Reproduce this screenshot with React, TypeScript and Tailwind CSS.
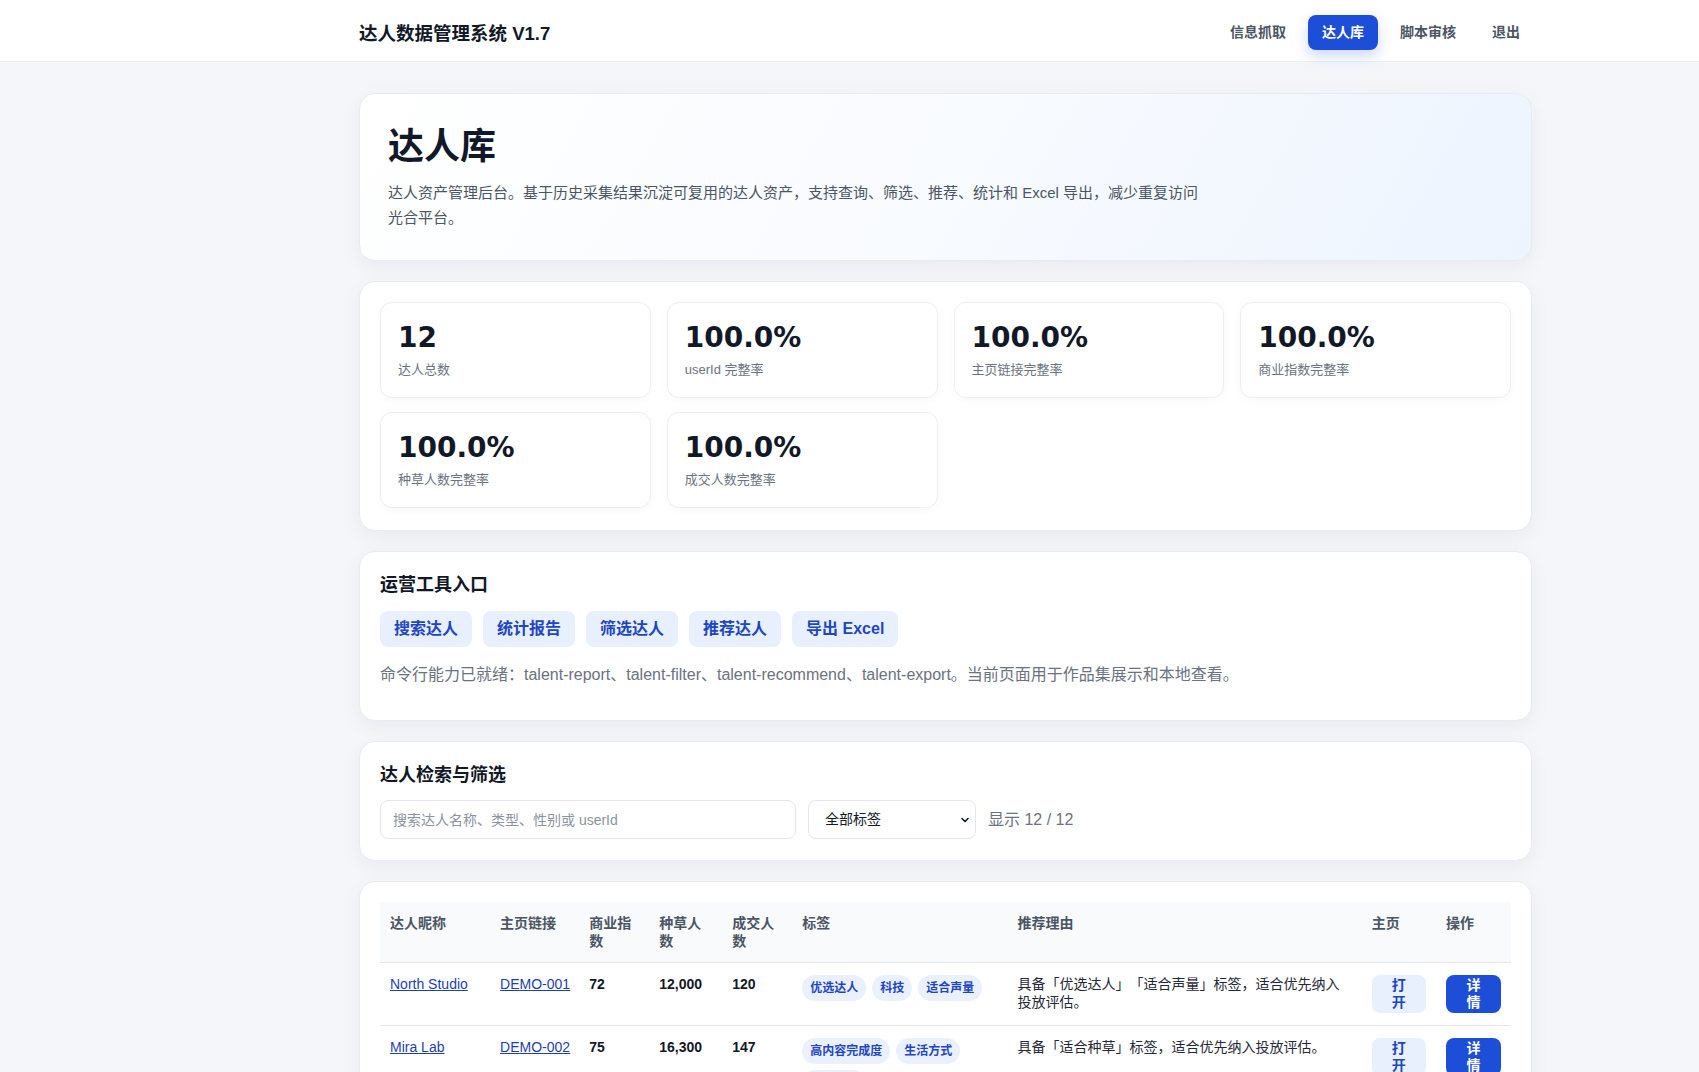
import React from "react";

type Talent = {
  name: string;
  code: string;
  biz: number;
  seed: string;
  deal: number;
  tags: string[];
  reason: string;
};

const talents: Talent[] = [
  { name: "North Studio", code: "DEMO-001", biz: 72, seed: "12,000", deal: 120, tags: ["优选达人", "科技", "适合声量"], reason: "具备「优选达人」「适合声量」标签，适合优先纳入投放评估。" },
  { name: "Mira Lab", code: "DEMO-002", biz: 75, seed: "16,300", deal: 147, tags: ["高内容完成度", "生活方式", "适合种草"], reason: "具备「适合种草」标签，适合优先纳入投放评估。" },
  { name: "Aurora Daily", code: "DEMO-003", biz: 68, seed: "9,800", deal: 96, tags: ["美妆", "适合种草"], reason: "具备「适合种草」标签，适合优先纳入投放评估。" },
  { name: "Pixel Kitchen", code: "DEMO-004", biz: 81, seed: "21,500", deal: 203, tags: ["优选达人", "美食"], reason: "具备「优选达人」标签，适合优先纳入投放评估。" },
  { name: "Urban Trail", code: "DEMO-005", biz: 64, seed: "7,200", deal: 58, tags: ["户外", "适合声量"], reason: "具备「适合声量」标签，适合优先纳入投放评估。" },
  { name: "Lumi Beauty", code: "DEMO-006", biz: 77, seed: "18,900", deal: 176, tags: ["美妆", "高转化"], reason: "成交人数表现稳定，可作为转化类投放备选。" },
  { name: "Echo Gadget", code: "DEMO-007", biz: 70, seed: "11,400", deal: 109, tags: ["科技", "数码"], reason: "商业指数良好，适合科技类新品推广。" },
  { name: "Cozy Home", code: "DEMO-008", biz: 66, seed: "8,600", deal: 84, tags: ["家居", "生活方式"], reason: "内容调性稳定，适合家居品类长期合作。" },
  { name: "Fit Lab", code: "DEMO-009", biz: 73, seed: "13,700", deal: 131, tags: ["运动", "适合种草"], reason: "具备「适合种草」标签，适合优先纳入投放评估。" },
  { name: "Sunny Travel", code: "DEMO-010", biz: 69, seed: "10,200", deal: 92, tags: ["旅行", "适合声量"], reason: "具备「适合声量」标签，适合优先纳入投放评估。" },
  { name: "Bloom Fashion", code: "DEMO-011", biz: 79, seed: "19,800", deal: 188, tags: ["优选达人", "穿搭"], reason: "具备「优选达人」标签，适合优先纳入投放评估。" },
  { name: "Nova Pet", code: "DEMO-012", biz: 71, seed: "12,600", deal: 115, tags: ["萌宠", "高内容完成度"], reason: "内容完成度高，适合萌宠品类投放评估。" },
];

const stats = [
  { value: "12", label: "达人总数" },
  { value: "100.0%", label: "userId 完整率" },
  { value: "100.0%", label: "主页链接完整率" },
  { value: "100.0%", label: "商业指数完整率" },
  { value: "100.0%", label: "种草人数完整率" },
  { value: "100.0%", label: "成交人数完整率" },
];

const tools = ["搜索达人", "统计报告", "筛选达人", "推荐达人", "导出 Excel"];

const columns: { label: string; width: number }[] = [
  { label: "达人昵称", width: 110 },
  { label: "主页链接", width: 89 },
  { label: "商业指数", width: 70 },
  { label: "种草人数", width: 73 },
  { label: "成交人数", width: 70 },
  { label: "标签", width: 215 },
  { label: "推荐理由", width: 354 },
  { label: "主页", width: 74 },
  { label: "操作", width: 75 },
];

const card =
  "rounded-2xl border border-[#e8ecf2] bg-white shadow-[0_6px_20px_rgba(15,23,42,0.05)]";

function Header() {
  return (
    <header className="h-[62px] bg-white border-b border-[#edf0f4]">
      <div className="ml-[359px] w-[1173px] h-full flex items-center justify-between pt-[3px]">
        <div className="text-[18.5px] font-bold text-[#111827] pt-[3px]">达人数据管理系统 V1.7</div>
        <nav className="flex items-center gap-2 text-[14px] font-bold mr-[-2px]">
          <a className="h-[35px] px-3.5 flex items-center rounded-lg text-[#4b5563]">信息抓取</a>
          <a className="h-[35px] px-3.5 flex items-center rounded-lg bg-[#1d4ed8] text-white shadow-[0_6px_14px_rgba(29,78,216,0.22)]">
            达人库
          </a>
          <a className="h-[35px] px-3.5 flex items-center rounded-lg text-[#4b5563]">脚本审核</a>
          <a className="h-[35px] px-3.5 flex items-center rounded-lg text-[#4b5563]">退出</a>
        </nav>
      </div>
    </header>
  );
}

function Hero() {
  return (
    <section
      className={`${card} px-7 pt-[31px] pb-[30px] bg-[linear-gradient(120deg,#ffffff_0%,#f7faff_55%,#edf4fe_100%)]`}
    >
      <h1 className="text-[36px] leading-[43px] font-bold text-[#111827]">达人库</h1>
      <p className="mt-3 max-w-[812px] text-[15px] leading-[25px] text-[#4b5563]">
        达人资产管理后台。基于历史采集结果沉淀可复用的达人资产，支持查询、筛选、推荐、统计和 Excel 导出，减少重复访问光合平台。
      </p>
    </section>
  );
}

function Stats() {
  return (
    <section className={`${card} px-5 pt-5 pb-[22px]`}>
      <div className="grid grid-cols-4 gap-x-4 gap-y-[14px]">
        {stats.map((s) => (
          <div
            key={s.label}
            className="rounded-xl border border-[#eceff3] bg-white px-[17px] py-[17px] shadow-[0_2px_8px_rgba(15,23,42,0.03)]"
          >
            <div className="font-['DejaVu_Sans',sans-serif] text-[28px] leading-[36px] font-bold text-[#111827]">
              {s.value}
            </div>
            <div className="mt-1 text-[13px] leading-5 text-[#6b7280]">{s.label}</div>
          </div>
        ))}
      </div>
    </section>
  );
}

function Tools() {
  return (
    <section className={`${card} px-5 pt-5 pb-[33px]`}>
      <h2 className="text-[18px] leading-[27px] font-bold text-[#111827]">运营工具入口</h2>
      <div className="mt-3 flex gap-[11px]">
        {tools.map((t) => (
          <button
            key={t}
            className="rounded-lg bg-[#e8f0fd] px-[14px] py-1.5 text-[16px] leading-6 font-bold text-[#1e46c0]"
          >
            {t}
          </button>
        ))}
      </div>
      <p className="mt-4 text-[16px] leading-6 text-[#6b7280]">
        命令行能力已就绪：talent-report、talent-filter、talent-recommend、talent-export。当前页面用于作品集展示和本地查看。
      </p>
    </section>
  );
}

function Filters() {
  return (
    <section className={`${card} px-5 pt-5 pb-[21px]`}>
      <h2 className="text-[18px] leading-[27px] font-bold text-[#111827]">达人检索与筛选</h2>
      <div className="mt-[11px] flex items-center gap-3">
        <input
          className="w-[416px] h-[39px] rounded-lg border border-[#e3e6eb] px-3 text-[14px] text-[#111827] placeholder:text-[#8b93a1] outline-none"
          placeholder="搜索达人名称、类型、性别或 userId"
        />
        <div className="relative w-[168px] h-[39px]">
          <select className="appearance-none w-full h-full rounded-lg border border-[#e3e6eb] bg-white pl-4 pr-8 text-[14px] text-[#111827] outline-none">
            <option>全部标签</option>
            <option>优选达人</option>
            <option>适合种草</option>
            <option>适合声量</option>
          </select>
          <svg
            className="pointer-events-none absolute right-[6px] top-1/2 -translate-y-1/2"
            width="10"
            height="10"
            viewBox="0 0 10 10"
            fill="none"
          >
            <path d="M2 3.5 L5 6.5 L8 3.5" stroke="#111827" strokeWidth="1.6" strokeLinecap="round" strokeLinejoin="round" />
          </svg>
        </div>
        <span className="text-[16px] text-[#6b7280]">显示 12 / 12</span>
      </div>
    </section>
  );
}

function TalentTable() {
  return (
    <section className={`${card} p-5 mb-10`}>
      <table className="w-full table-fixed border-collapse text-[14px]">
        <colgroup>
          {columns.map((c) => (
            <col key={c.label} style={{ width: c.width }} />
          ))}
        </colgroup>
        <thead>
          <tr className="bg-[#f8fafc] border-b border-[#e5e7eb]">
            {columns.map((c) => (
              <th key={c.label} className="px-2.5 py-3 text-left align-top leading-[18px] font-bold text-[#4b5563]">
                {c.label}
              </th>
            ))}
          </tr>
        </thead>
        <tbody>
          {talents.map((t) => (
            <tr key={t.code} className="border-b border-[#e5e7eb]">
              <td className="px-2.5 py-3 align-top leading-[18px] whitespace-nowrap">
                <a className="text-[#1e3fae] underline">{t.name}</a>
              </td>
              <td className="px-2.5 py-3 align-top leading-[18px] whitespace-nowrap">
                <a className="text-[#1e3fae] underline">{t.code}</a>
              </td>
              <td className="px-2.5 py-3 align-top leading-[18px] font-bold text-[#111827]">{t.biz}</td>
              <td className="px-2.5 py-3 align-top leading-[18px] font-bold text-[#111827]">{t.seed}</td>
              <td className="px-2.5 py-3 align-top leading-[18px] font-bold text-[#111827]">{t.deal}</td>
              <td className="px-2.5 py-3 align-top">
                <div className="flex flex-wrap gap-1.5">
                  {t.tags.map((tag) => (
                    <span
                      key={tag}
                      className="rounded-full bg-[#eaf1fd] px-2 py-1 text-[12px] leading-[18px] font-bold text-[#1e46c0]"
                    >
                      {tag}
                    </span>
                  ))}
                </div>
              </td>
              <td className="px-2.5 py-3 align-top leading-[18px] text-[#1f2937]">{t.reason}</td>
              <td className="px-2.5 py-3 align-top">
                <button className="inline-block rounded-lg bg-[#e8f0fd] px-[14px] py-0.5 text-[14px] leading-[17px] font-bold text-[#1e46c0]">
                  打开
                </button>
              </td>
              <td className="px-2.5 py-3 align-top">
                <button className="inline-block rounded-lg bg-[#1d4ed8] px-[14px] py-0.5 text-[14px] leading-[17px] font-bold text-white">
                  详情
                </button>
              </td>
            </tr>
          ))}
        </tbody>
      </table>
    </section>
  );
}

export default function App() {
  return (
    <div className="min-h-screen bg-[#f4f6fa] font-['Liberation_Sans','Noto_Sans_CJK_SC',sans-serif] [text-spacing-trim:space-all]">
      <Header />
      <main className="ml-[359px] w-[1173px] pt-[31px] flex flex-col gap-5">
        <Hero />
        <Stats />
        <Tools />
        <Filters />
        <TalentTable />
      </main>
    </div>
  );
}
